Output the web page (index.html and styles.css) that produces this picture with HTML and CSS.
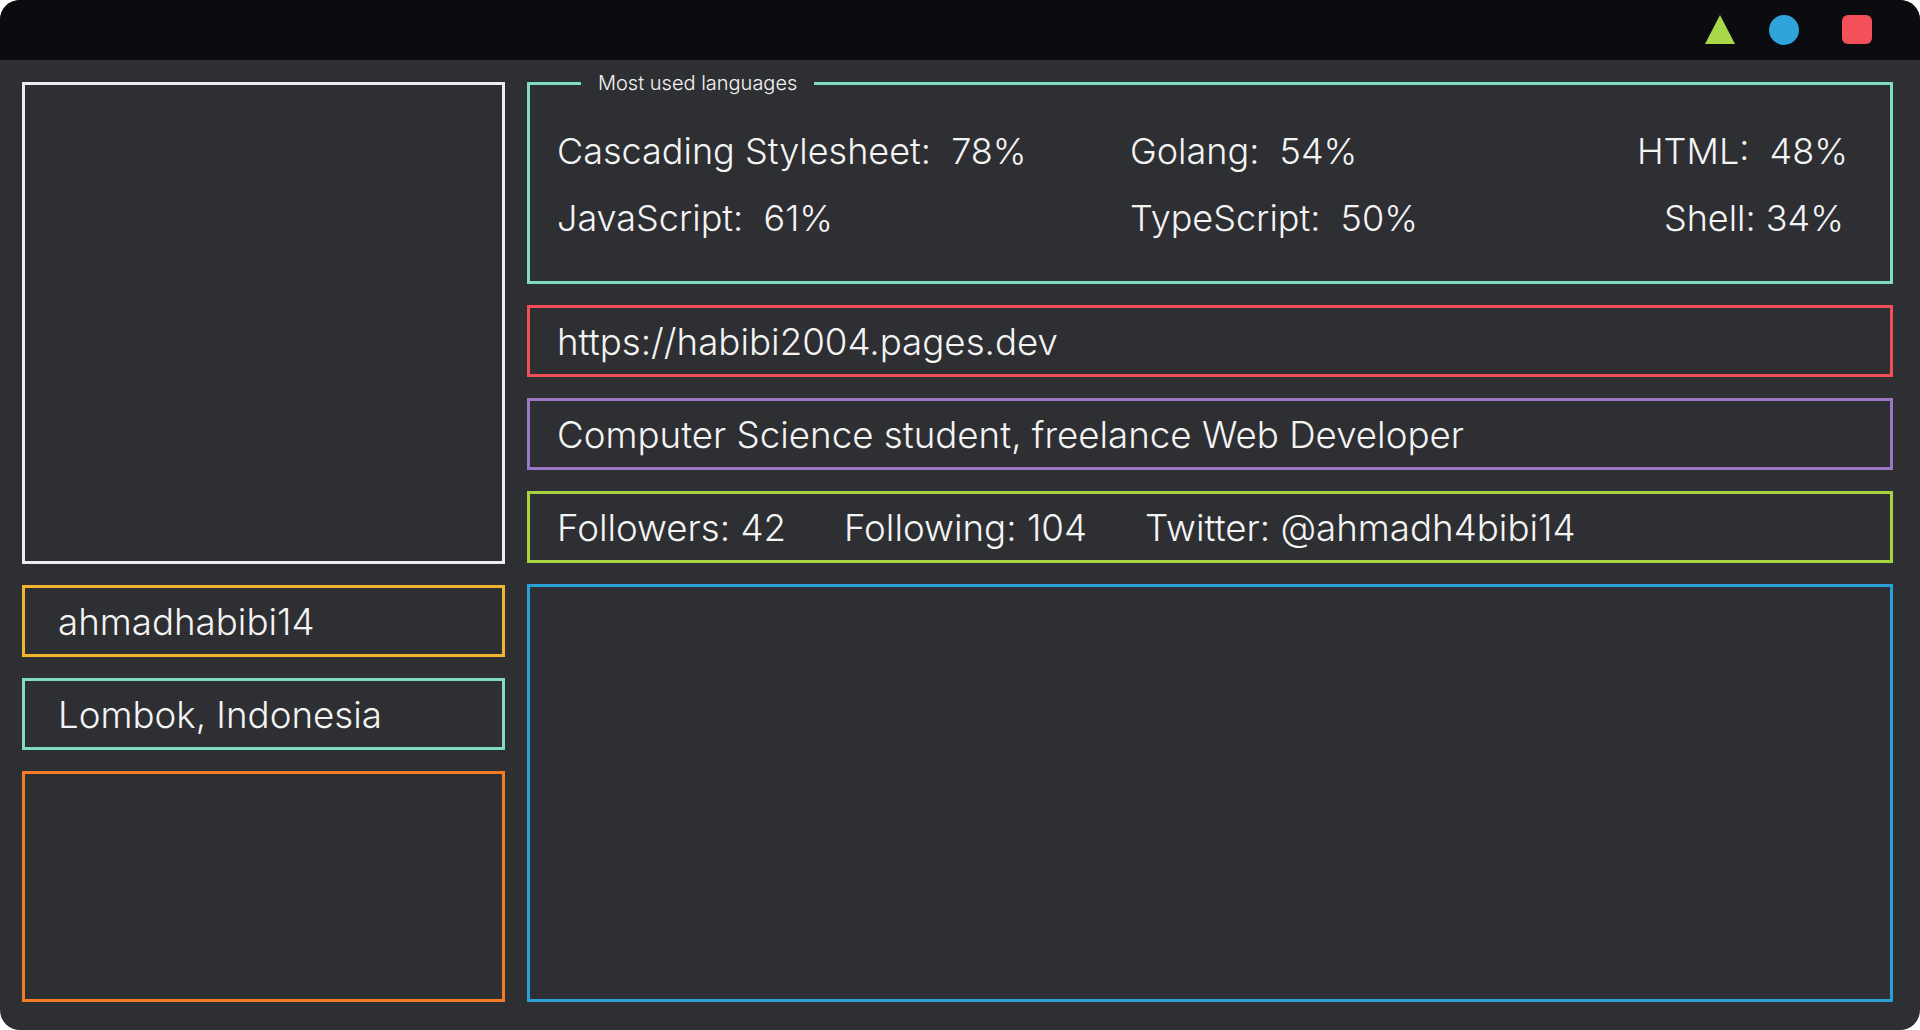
FILE: index.html
```html
<!DOCTYPE html>
<html lang="en">
<head>
<meta charset="utf-8">
<title>Profile</title>
<link rel="stylesheet" href="styles.css">
</head>
<body>
<div class="window">
  <header class="titlebar">
    <div class="controls">
      <svg class="ctl tri" width="30" height="29" viewBox="0 0 30 29"><polygon points="15,0 30,29 0,29" fill="#a8d84a"/></svg>
      <span class="ctl dot"></span>
      <span class="ctl sq"></span>
    </div>
  </header>
  <main class="content">
    <aside class="col left">
      <div class="box avatar"></div>
      <div class="box field yellow lpad">ahmadhabibi14</div>
      <div class="box field teal lpad">Lombok, Indonesia</div>
      <div class="box orange grow"></div>
    </aside>
    <section class="col right">
      <div class="box teal langs">
        <span class="legend">Most used languages</span>
        <div class="lang-grid">
          <span>Cascading Stylesheet:  78%</span>
          <span>Golang:  54%</span>
          <span class="end">HTML:  48%</span>
          <span>JavaScript:  61%</span>
          <span>TypeScript:  50%</span>
          <span class="end shell">Shell: 34%</span>
        </div>
      </div>
      <div class="box field red">https://habibi2004.pages.dev</div>
      <div class="box field purple">Computer Science student, freelance Web Developer</div>
      <div class="box field lime stats">
        <span>Followers: 42</span>
        <span>Following: 104</span>
        <span>Twitter: @ahmadh4bibi14</span>
      </div>
      <div class="box blue grow"></div>
    </section>
  </main>
</div>
</body>
</html>
```

FILE: styles.css
```css
* { box-sizing: border-box; }
html, body { margin: 0; padding: 0; background: #ffffff; }
body { font-family: Inter, "Noto Sans", sans-serif; color: #f4f4f4; font-weight: 300; }

.window {
  width: 1920px;
  height: 1030px;
  border-radius: 20px;
  overflow: hidden;
  background: #2e2f33;
  display: flex;
  flex-direction: column;
}

.titlebar {
  height: 60px;
  background: #0a0c10;
  display: flex;
  justify-content: flex-end;
  align-items: flex-start;
  padding: 15px 48px 0 0;
}
.controls { display: flex; align-items: flex-start; }
.ctl { display: block; }
.dot {
  width: 30px; height: 30px; border-radius: 50%;
  background: #2fa3dc; margin-left: 34px;
}
.sq {
  width: 30px; height: 29px; border-radius: 6px;
  background: #f4505a; margin-left: 43px;
}

.content {
  flex: 1;
  display: grid;
  grid-template-columns: 483px 1366px;
  column-gap: 22px;
  padding: 22px 27px 28px 22px;
  min-height: 0;
}
.col { display: flex; flex-direction: column; gap: 21px; min-height: 0; }

.box { border: 3px solid #ececec; }
.avatar { height: 482px; border-color: #ededed; }
.grow { flex: 1; }

.field {
  height: 72px;
  display: flex;
  align-items: center;
  padding-left: 27px;
  font-size: 36.7px;
  white-space: pre;
}
.lpad { padding-left: 33px; }

.yellow { border-color: #f2b42c; }
.teal { border-color: #80dcc0; }
.orange { border-color: #f77a24; }
.red { border-color: #f24e58; }
.purple { border-color: #9b78c6; }
.lime { border-color: #a6d33f; }
.blue { border-color: #2a9fd9; }

.langs {
  position: relative;
  height: 202px;
  padding: 45px 42px 0 27px;
}
.legend {
  position: absolute;
  top: -14px;
  left: 51px;
  padding: 0 17px;
  background: #2e2f33;
  font-size: 20px;
  line-height: 24px;
}
.lang-grid {
  display: grid;
  grid-template-columns: 573px 1fr auto;
  row-gap: 24px;
  font-size: 36px;
  line-height: 43px;
  white-space: pre;
}
.end { text-align: right; }
.shell { padding-right: 4px; }

.stats { gap: 58px; }
```
